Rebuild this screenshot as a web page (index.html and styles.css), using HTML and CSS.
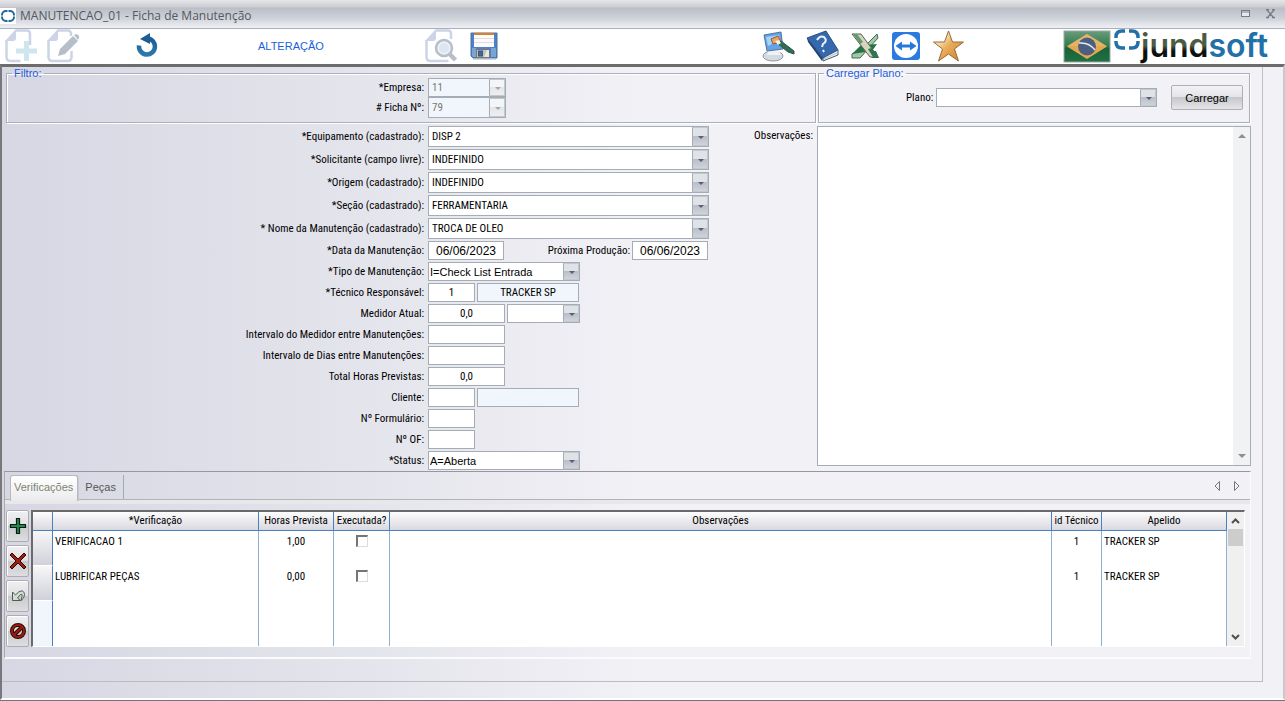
FILE: index.html
```html
<!DOCTYPE html>
<html lang="pt-BR">
<head>
<meta charset="utf-8">
<title>MANUTENCAO_01 - Ficha de Manutenção</title>
<link rel="stylesheet" href="styles.css">
</head>
<body>
<div class="window">
  <header class="titlebar">
    <svg class="app-icon" viewBox="0 0 16 16"><rect width="16" height="16" fill="#fff"/><rect x="2" y="3" width="12" height="10" rx="4" fill="none" stroke="#1f6a9c" stroke-width="2"/><path d="M8 1v4M8 11v4M0 8h4M12 8h4" stroke="#fff"/></svg>
    <h1 class="title">MANUTENCAO_01 - Ficha de Manutenção</h1>
    <div class="window-buttons">
      <button class="plain" aria-label="Restaurar"><svg width="10" height="8" viewBox="0 0 10 8"><rect x=".5" y=".5" width="8" height="6" fill="#e8e9ec" stroke="#777c84"/><path d="M0 2h9" stroke="#777c84" stroke-width="1"/></svg></button>
      <button class="plain" aria-label="Fechar"><svg width="11" height="10" viewBox="0 0 11 10"><path d="M1 .5h3M7 .5h3M1 8.500h3M7 8.500h3M2 1l6 7M9 1L3 8" stroke="#777c84" stroke-width="1.300" fill="none"/></svg></button>
    </div>
  </header>

  <div class="toolbar">
    <div class="tools-edit">
      <button class="plain" aria-label="Novo"><svg width="34" height="34" viewBox="0 0 34 34"><path d="M2.500 11v17q0 4 4 4h10M26 16V5q0-3.500-3-3.500H12" fill="none" stroke="#cdd3e8" stroke-width="2.500"/><path d="M1 12L12 0v9q0 3-3 3z" fill="#cdd3e8"/><path d="M22.500 12v20M12 22h21" stroke="#cfe6ef" stroke-width="5"/></svg></button>
      <button class="plain" aria-label="Editar"><svg width="34" height="34" viewBox="0 0 34 34"><path d="M2.500 11v17q0 4 4 4h15q4 0 4-4v-6M25 7V4q-1-2.500-3-2.500H12" fill="none" stroke="#cdd3e8" stroke-width="2.500"/><path d="M1 12L12 0v9q0 3-3 3z" fill="#cdd3e8"/><path d="M12 27l2-7L27 7l5 5-13 13z" fill="#b6bec9"/><path d="M28 6l2-1q4 1 3 4l-1 2z" fill="#b6bec9"/></svg></button>
    </div>
    <button class="plain refresh" aria-label="Desfazer"><svg width="24" height="28" viewBox="0 0 24 28"><defs><linearGradient id="rf" x2="0" y2="1"><stop stop-color="#1b5d94"/><stop offset="1" stop-color="#2b7aab"/></linearGradient></defs><path d="M11 6.500a8 8 0 1 1-8 7" fill="none" stroke="url(#rf)" stroke-width="4.500"/><path d="M4 7L14 1v11z" fill="#1b5d94"/></svg></button>
    <span class="mode">ALTERAÇÃO</span>
    <div class="tools-save">
      <button class="plain" aria-label="Pesquisar"><svg width="34" height="34" viewBox="0 0 34 34"><path d="M2.500 11v17q0 4 4 4h18M27 10V5q0-3.500-3-3.500H12" fill="none" stroke="#cdd3e8" stroke-width="2.500"/><path d="M1 12L12 0v9q0 3-3 3z" fill="#cdd3e8"/><circle cx="20" cy="19" r="8" fill="#eaf1f8" stroke="#b6bec9" stroke-width="2.500"/><circle cx="20" cy="19" r="5" fill="#dce6f1"/><path d="M25.500 25l6 6" stroke="#b6bec9" stroke-width="4.500"/></svg></button>
      <button class="plain" aria-label="Salvar"><svg width="28" height="28" viewBox="0 0 28 28"><path d="M3 27h23v1H3z" fill="#d5d9de"/><path d="M1 1h26v25H3l-2-2z" fill="#4b82cb" stroke="#4f6f98"/><path d="M2 16h4v9H3l-1-1zM21 16h5v9h-5z" fill="#7aa5d2"/><rect x="4" y="1" width="20" height="2" fill="#dd8027"/><rect x="4" y="3" width="20" height="12" fill="#fbfbfb"/><path d="M4 6.500h20M4 10.500h20" stroke="#dedede"/><rect x="6.500" y="17.500" width="13" height="8" fill="#c4c4bf" stroke="#777"/><rect x="8.500" y="19" width="4" height="5" fill="#3569b4" stroke="#456"/><path d="M14 25l3-7h2v7z" fill="#e8e8e4"/></svg></button>
    </div>
    <div class="tools-right">
      <button class="plain" aria-label="Aparência"><svg width="33" height="32" viewBox="0 0 33 32"><ellipse cx="11" cy="26" rx="10" ry="5" fill="#d3dae2" stroke="#8d99a6"/><path d="M6 20h11l2 5H5z" fill="#eef2f5"/><path d="M2 5l17-3 2 17-16 2z" fill="#62a5e6" stroke="#53739c"/><path d="M4 7l13-2 1 5-12 6z" fill="#a4d4fa"/><path d="M9 9l7-3 3 6-8 2z" fill="#eca55b" stroke="#8c583a"/><path d="M16 14l3-3 13 10v3l-6-2z" fill="#2c6f55" stroke="#385548"/><path d="M13 11l4-1 2 3-3 2z" fill="#eee"/></svg></button>
      <button class="plain" aria-label="Ajuda"><svg width="33" height="32" viewBox="0 0 33 32"><path d="M1 8L20 1l12 19-15 8z" fill="#3569ad" stroke="#2b4f80"/><path d="M1 8l1 4 14 19 1-3z" fill="#214779"/><path d="M17 28l15-8v5l-15 6z" fill="#eef1f4" stroke="#41597b"/><path d="M18 29l13-6" stroke="#b5bdc8"/><path d="M11 10q3-5 7-3 4 4-1 7l-1 3M17 20l1 2" fill="none" stroke="#eaf1fb" stroke-width="2"/></svg></button>
      <button class="plain" aria-label="Excel"><svg width="30" height="28" viewBox="0 0 30 28"><path d="M27 2L15 14 2 22v4h8L28 6z" fill="#a7c5a6" stroke="#3c7150"/><path d="M15 13l12-1-5 7-20 3 9-9z" fill="#237349"/><path d="M18 20l8-1 3 7h-7z" fill="#237349"/><path d="M2 2h9l17 23h-8z" fill="#d7d3bd" stroke="#55644e"/><path d="M18 17l4-1 6 9h-5z" fill="#2f7750"/><path d="M3 2h4l6 8-3 2z" fill="#5e9b72"/></svg></button>
      <button class="plain" aria-label="Acesso remoto"><svg width="30" height="30" viewBox="0 0 30 30"><rect x="1" y="1" width="28" height="28" rx="3" fill="#2a7adf"/><circle cx="15" cy="15" r="12" fill="#fff"/><path d="M4.500 15l6.500-4.500v3h8v-3l6.500 4.500-6.500 4.500v-3h-8v3z" fill="#2678dc"/></svg></button>
      <button class="plain" aria-label="Favoritos"><svg width="33" height="32" viewBox="0 0 33 32"><defs><linearGradient id="st" x2="1" y2="1"><stop offset=".2" stop-color="#fff0cd"/><stop offset=".5" stop-color="#e7ac5b"/><stop offset="1" stop-color="#d07d22"/></linearGradient></defs><path d="M16.500 1l4 11h11l-9 7 4 12-10-7-10 7 4-12-9-7h11z" fill="url(#st)" stroke="#9a6a39"/></svg></button>
    </div>
    <svg class="flag" width="48" height="33" viewBox="0 0 48 33"><defs><linearGradient id="fg" x2="0" y2="1"><stop stop-color="#6a9c7c"/><stop offset=".5" stop-color="#2f7a4b"/><stop offset=".55" stop-color="#186239"/><stop offset="1" stop-color="#1f7143"/></linearGradient></defs><rect x="1" y="1" width="46" height="31" fill="url(#fg)" stroke="#9aa99f"/><path d="M24 4l20 12.500L24 29 4 16.500z" fill="#e2a750"/><path d="M24 4l20 12H4z" fill="#ecc07d" opacity=".5"/><circle cx="24" cy="16.500" r="9" fill="#4b5f83"/><path d="M16 13q10-1 16 7" fill="none" stroke="#e8e9ec" stroke-width="1.500"/></svg>
    <svg class="logo" width="160" height="40" viewBox="0 -2 160 40"><defs><linearGradient id="lg" x2="0" y2="1"><stop offset=".5" stop-color="#4c5b43"/><stop offset=".65" stop-color="#0d100d"/></linearGradient></defs><path d="M12 3H9Q3 3 3 9v1M3 13v1q0 6 6 6h3M16 3h3q6 0 6 6v1M25 13v1q0 6-6 6h-3" fill="none" stroke="#2270a8" stroke-width="3.500"/><text x="28" y="29" class="logo-text"><tspan fill="url(#lg)">jund</tspan><tspan fill="#2270a8">soft</tspan></text></svg>
  </div>

  <main class="client">
    <div class="page">
      <form class="content">
        <div class="filters">
          <fieldset class="group">
            <legend>Filtro:</legend>
            <div class="row"><label for="empresa">*Empresa:</label><span class="combo w-key off"><select id="empresa" disabled><option>11</option></select></span></div>
            <div class="row"><label for="ficha"># Ficha Nº:</label><span class="combo w-key off tall"><select id="ficha" disabled><option>79</option></select></span></div>
          </fieldset>
          <fieldset class="group">
            <legend>Carregar Plano:</legend>
            <div class="plan">
              <label for="plano">Plano:</label><span class="combo w-plan"><select id="plano"><option></option></select></span>
              <button type="button" class="load">Carregar</button>
            </div>
          </fieldset>
        </div>

        <div class="details">
          <div class="fields">
            <div class="row"><label for="equip">*Equipamento (cadastrado):</label><span class="combo tall w-full"><select id="equip"><option>DISP 2</option></select></span></div>
            <div class="row"><label for="solic">*Solicitante (campo livre):</label><span class="combo tall w-full"><select id="solic"><option>INDEFINIDO</option></select></span></div>
            <div class="row"><label for="origem">*Origem (cadastrado):</label><span class="combo tall w-full"><select id="origem"><option>INDEFINIDO</option></select></span></div>
            <div class="row"><label for="secao">*Seção (cadastrado):</label><span class="combo tall w-full"><select id="secao"><option>FERRAMENTARIA</option></select></span></div>
            <div class="row"><label for="nome">* Nome da Manutenção (cadastrado):</label><span class="combo tall w-full"><select id="nome"><option>TROCA DE OLEO</option></select></span></div>
            <div class="row"><label for="data">*Data da Manutenção:</label><input id="data" class="w-date date" value="06/06/2023"><label class="second" for="proxima">Próxima Produção:</label><input id="proxima" class="w-date date" value="06/06/2023"></div>
            <div class="row"><label for="tipo">*Tipo de Manutenção:</label><span class="combo wide-text w-mid"><select id="tipo"><option>I=Check List Entrada</option></select></span></div>
            <div class="row"><label for="tecnico">*Técnico Responsável:</label><input id="tecnico" class="w-id" value="1"><input class="w-name locked" aria-label="Nome do técnico" value="TRACKER SP" readonly></div>
            <div class="row"><label for="medidor">Medidor Atual:</label><input id="medidor" class="w-num" value="0,0"><span class="combo w-unit"><select aria-label="Unidade do medidor"><option></option></select></span></div>
            <div class="row"><label for="intmed">Intervalo do Medidor entre Manutenções:</label><input id="intmed" class="w-num"></div>
            <div class="row"><label for="intdias">Intervalo de Dias entre Manutenções:</label><input id="intdias" class="w-num"></div>
            <div class="row"><label for="horas">Total Horas Previstas:</label><input id="horas" class="w-num" value="0,0"></div>
            <div class="row"><label for="cliente">Cliente:</label><input id="cliente" class="w-id"><input class="w-name locked" aria-label="Nome do cliente" readonly></div>
            <div class="row"><label for="formulario">Nº Formulário:</label><input id="formulario" class="w-id"></div>
            <div class="row"><label for="of">Nº OF:</label><input id="of" class="w-id"></div>
            <div class="row"><label for="status">*Status:</label><span class="combo wide-text w-mid"><select id="status"><option>A=Aberta</option></select></span></div>
          </div>
          <label class="notes-label" for="obs">Observações:</label>
          <div class="notes">
            <textarea id="obs"></textarea>
            <div class="notes-scroll"><i class="tri up"></i><i class="tri down"></i></div>
          </div>
        </div>

        <section class="tabs">
          <div class="tab-strip" role="tablist">
            <button type="button" class="tab active" role="tab" aria-selected="true">Verificações</button>
            <button type="button" class="tab" role="tab" aria-selected="false">Peças</button>
            <div class="tab-arrows">
              <button type="button" class="plain" aria-label="Aba anterior"><svg width="8" height="10" viewBox="0 0 8 10"><path d="M6.500 .5v9L2 5z" fill="none" stroke="#777"/></svg></button>
              <button type="button" class="plain" aria-label="Próxima aba"><svg width="8" height="10" viewBox="0 0 8 10"><path d="M1.500 .5v9L6 5z" fill="none" stroke="#777"/></svg></button>
            </div>
          </div>
          <div class="tab-body">
            <div class="side">
              <button type="button" class="side-btn" aria-label="Adicionar"><svg width="18" height="18" viewBox="0 0 18 18"><path d="M7.500 1.500h3v6h6v3h-6v6h-3v-6h-6v-3h6z" fill="#1e8a50" stroke="#0d1a12" stroke-width="1.200"/></svg></button>
              <button type="button" class="side-btn" aria-label="Excluir"><svg width="18" height="18" viewBox="0 0 18 18"><path d="M1 3l2-2 6 6 6-6 2 2-6 6 6 6-2 2-6-6-6 6-2-2 6-6z" fill="#a01c0c" stroke="#260a06"/></svg></button>
              <button type="button" class="side-btn" aria-label="Reverter"><svg width="18" height="18" viewBox="0 0 18 18"><path d="M3.500 5v8.500h8L8.500 11l3-3.500q2-1 1.500 2l-1 4q3.500-2 3.500-6-.5-4-3.500-3.500-2 0-5.500 4z" fill="#d3dcd5" stroke="#4d5b51"/></svg></button>
              <button type="button" class="side-btn" aria-label="Cancelar"><svg width="18" height="18" viewBox="0 0 18 18"><circle cx="9" cy="9" r="6" fill="none" stroke="#260a06" stroke-width="4"/><path d="M5 13l8-8" stroke="#260a06" stroke-width="4"/><circle cx="9" cy="9" r="6" fill="none" stroke="#9c1c0d" stroke-width="2"/><path d="M5 13l8-8" stroke="#9c1c0d" stroke-width="2"/></svg></button>
            </div>
            <div class="grid">
              <table>
                <colgroup><col class="c-sel"><col class="c-ver"><col class="c-hor"><col class="c-exe"><col><col class="c-id"><col class="c-ape"></colgroup>
                <thead><tr><th></th><th>*Verificação</th><th>Horas Prevista</th><th>Executada?</th><th>Observações</th><th>id Técnico</th><th>Apelido</th></tr></thead>
                <tbody>
                  <tr><td class="sel"></td><td>VERIFICACAO 1</td><td class="c">1,00</td><td class="c"><input type="checkbox" aria-label="Executada, VERIFICACAO 1"></td><td></td><td class="c">1</td><td>TRACKER SP</td></tr>
                  <tr><td class="sel"></td><td>LUBRIFICAR PEÇAS</td><td class="c">0,00</td><td class="c"><input type="checkbox" aria-label="Executada, LUBRIFICAR PEÇAS"></td><td></td><td class="c">1</td><td>TRACKER SP</td></tr>
                  <tr class="rest"><td></td><td></td><td></td><td></td><td></td><td></td><td></td></tr>
                </tbody>
              </table>
              <div class="grid-scroll">
                <svg width="9" height="6" viewBox="0 0 9 6"><path d="M1 5l3.500-3.500L8 5" fill="none" stroke="#505050" stroke-width="2"/></svg>
                <span class="thumb"></span>
                <svg width="9" height="6" viewBox="0 0 9 6"><path d="M1 1l3.500 3.500L8 1" fill="none" stroke="#505050" stroke-width="2"/></svg>
              </div>
            </div>
          </div>
        </section>
      </form>
    </div>
  </main>
</div>
</body>
</html>
```
FILE: styles.css
```css
* { box-sizing: border-box; }

body {
  margin: 0;
  font: 11px/14px "Roboto Condensed", Roboto, sans-serif;
  color: #000;
}

button, input, select, textarea { font: inherit; color: inherit; margin: 0; }

.plain { border: 0; padding: 0; background: none; display: block; }
svg { display: block; }

.window {
  min-height: 100vh;
  display: flex;
  flex-direction: column;
  border-bottom: 1px solid #70757f;
  background: #f2f1f6;
}

/* Title bar */
.titlebar {
  height: 28px;
  display: flex;
  align-items: center;
  gap: 4px;
  padding: 4px 9px 0 0;
  background: linear-gradient(#e6e7ea 0, #cbcbd1 7px, #b9bfc8 8px, #cdd2d9 18px, #eff0f4 28px);
}
.app-icon { width: 16px; height: 16px; }
.title { margin: 0; font: 12px/16px "Open Sans", sans-serif; color: #55585c; }
.window-buttons { margin-left: auto; display: flex; align-items: center; gap: 14px; padding-bottom: 4px; }

/* Toolbar */
.toolbar {
  height: 36px;
  display: flex;
  align-items: center;
  padding: 0 12px 1px 4px;
  border-top: 1px solid #a9b0bb;
  background: #fff;
}
.tools-edit { display: flex; gap: 8px; }
.refresh { margin-left: 56px; }
.mode { margin-left: 98px; width: 166px; padding-bottom: 1px; font: 11px/14px "Liberation Sans", Arial, sans-serif; color: #1d5fd8; }
.tools-save { display: flex; align-items: center; gap: 12px; }
.tools-right { margin-left: auto; display: flex; align-items: center; gap: 11px; }
.flag { margin-left: 98px; }
.logo { margin-left: 2px; }
.logo-text { font: 600 32px Inter, sans-serif; }

/* Client area */
.client {
  flex: 1;
  display: flex;
  padding: 0 20px 16px 0;
  border-top: 3px solid #6c6c6c;
  border-left: 2px solid #77777c;
  border-right: 2px solid #c9c9cc;
  border-bottom: 2px solid #fff;
  background: linear-gradient(90deg, #d7d7e4 0, #e4e4ec 360px, #f2f1f6 640px);
}
.page {
  flex: 1;
  padding: 1px 11px 0 2px;
  border-right: 1px solid #c0c0c3;
  border-bottom: 1px solid #bcbcbf;
}

.filters { display: grid; grid-template-columns: 813fr 434fr; }
.group {
  min-width: 0;
  margin: 0 1px;
  padding: 0 0 4px;
  border: 1px solid #a9b0b9;
  box-shadow: 1px 1px 0 #fff, inset 1px 1px 0 #fff;
}
.group:first-child { margin-left: 2px; }
legend { margin-left: 5px; padding: 0 2px; font: 11px/10px "Liberation Sans", Arial, sans-serif; color: #1d5fd8; }

.row { display: flex; align-items: center; gap: 2px; }
.row > label:first-child { width: 420px; padding: 1px 2px 0 0; text-align: right; }
.group .row { margin-left: -1px; }

.plan { display: flex; align-items: center; padding: 7px 6px 1px 87px; }
.plan label { margin-right: 3px; }
.load {
  width: 72px;
  height: 25px;
  margin-left: 14px;
  border: 1px solid #aeb0b4;
  border-radius: 2px;
  font: 11px/14px "Liberation Sans", Arial, sans-serif;
  background: linear-gradient(#f3f3f5, #e4e4e6 48%, #c6c7ca 50%, #e6e6e8);
}

/* Fields */
input, .combo, textarea { border: 1px solid #a4acb5; background: #fff; }
input { height: 19px; padding: 0; text-align: center; border-radius: 0; }
.locked, .off { background: #f1f6fc; }
.date, .wide-text { font: 12px/14px "Liberation Sans", Arial, sans-serif; }
.wide-text { font-size: 11px; }

.combo { position: relative; display: flex; height: 19px; }
.combo.tall { height: 21px; }
.combo select {
  flex: 1;
  min-width: 0;
  padding: 0 16px 0 3px;
  border: 0;
  border-radius: 0;
  appearance: none;
  background: none;
}
.combo.wide-text select { padding-left: 1px; }
.combo::before {
  content: "";
  position: absolute;
  top: 0;
  right: 0;
  bottom: 0;
  width: 14px;
  border: 1px solid #c3c8cf;
  border-left-color: #a4acb5;
  background: linear-gradient(#dfe2e7 48%, #b9bec9 50%, #cfd3da);
  pointer-events: none;
}
.combo::after {
  content: "";
  position: absolute;
  top: 50%;
  right: 4px;
  margin-top: -1px;
  border: 3px solid transparent;
  border-top-color: #5c5f70;
  border-bottom: 0;
  pointer-events: none;
}
.off select { color: #77786c; opacity: 1; }
.off::before { background: linear-gradient(#f4f5f7 48%, #e4e6e9 50%, #eeeff1); }
.off::after { border-top-color: #a5a8ac; }

.w-key { width: 78px; }
.w-plan { flex: 1; }
.w-full { width: 281px; }
.w-date { width: 76px; }
.w-mid { width: 152px; }
.w-id { width: 47px; }
.w-name { width: 102px; }
.w-num { width: 77px; }
.w-unit { width: 73px; }
.second { width: 124px; text-align: right; }

.details {
  display: grid;
  grid-template-columns: 709fr 104fr 434fr;
  padding-top: 3px;
}
.fields { display: flex; flex-direction: column; gap: 2px; padding-left: 2px; }
.notes-label { padding: 3px 4px 0 0; text-align: right; }
.notes { display: flex; margin-bottom: 4px; border: 1px solid #a4acb5; background: #fff; }
.notes textarea { flex: 1; min-width: 0; border: 0; resize: none; background: none; }
.notes-scroll {
  width: 17px;
  display: flex;
  flex-direction: column;
  justify-content: space-between;
  align-items: center;
  padding: 7px 0;
  background: #f1f2f3;
}
.tri { border: 4px solid transparent; }
.tri.up { border-bottom-color: #8d8f90; border-top: 0; }
.tri.down { border-top-color: #8d8f90; border-bottom: 0; }

/* Tabs */
.tabs {
  margin-top: 1px;
  padding-bottom: 10px;
  border-top: 1px solid #97979d;
  border-left: 1px solid #a9a9b0;
  border-bottom: 2px solid #fbfbfd;
  border-right: 1px solid #fbfbfd;
}
.tab-strip { display: flex; height: 28px; padding: 3px 0 0 5px; border-bottom: 1px solid #b3b3b5; }
.tab {
  padding: 0 7px 0 6px;
  border: 0;
  border-right: 1px solid #a8a8b0;
  font: 11px/14px "Liberation Sans", Arial, sans-serif;
  color: #55574f;
  background: none;
}
.tab.active {
  height: 26px;
  margin-right: 1px;
  padding: 0 4px 3px 3px;
  border: 1px solid #b9b9bd;
  border-bottom: 0;
  border-radius: 3px 3px 0 0;
  color: #7e8371;
  background: linear-gradient(#fff, #ebebee);
  box-shadow: 1px 0 0 #c8c8cf;
}
.tab-arrows { margin-left: auto; display: flex; align-items: center; gap: 12px; padding: 0 9px 2px 0; }
.tab-body { display: flex; gap: 2px; padding: 6px 5px 0 1px; border-top: 4px solid #e7e7ec; }
.side { display: flex; flex-direction: column; gap: 3px; }
.side-btn {
  width: 23px;
  height: 32px;
  padding: 0;
  display: grid;
  place-items: center;
  border: 1px solid #acacb2;
  border-radius: 2px;
  background: linear-gradient(#f0f0f2, #e0e0e3 48%, #c8c9cc 50%, #dedee1);
  box-shadow: inset 1px 1px 0 #fff;
}

.grid {
  flex: 1;
  display: flex;
  border: 1px solid #fff;
  border-top: 2px solid #6a6a6a;
  border-left: 2px solid #6a6a6a;
  background: #fff;
}
table { flex: 1; border-collapse: separate; border-spacing: 0; table-layout: fixed; width: 100%; }
.c-sel { width: 20px; }
.c-ver { width: 206px; }
.c-hor { width: 75px; }
.c-exe { width: 56px; }
.c-id { width: 50px; }
.c-ape { width: 125px; }
th {
  height: 19px;
  padding: 0;
  font-weight: normal;
  white-space: nowrap;
  border-right: 1px solid #4a7fc1;
  border-bottom: 1px solid #4a7fc1;
  background: linear-gradient(#fdfdfe, #d8d8df);
}
td { height: 35px; padding: 4px 2px 0; vertical-align: top; border-right: 1px solid #8fb0cf; }
td:first-child { border-right-color: #4a7fc1; background: #f1f6fd; }
td.sel { border-bottom: 1px solid #fff; background: linear-gradient(#f7f7f9, #d0d1d9); }
td.c { text-align: center; }
.rest td { height: auto; }
td input[type="checkbox"] {
  appearance: none;
  display: block;
  width: 12px;
  height: 12px;
  margin: 0 auto;
  border: 1px solid #dcdcdc;
  border-top: 2px solid #757575;
  border-left: 2px solid #757575;
}
.grid-scroll {
  width: 17px;
  display: flex;
  flex-direction: column;
  align-items: center;
  padding: 6px 0;
  background: #f0f0f0;
}
.thumb { width: 15px; height: 17px; margin: 5px 0 auto; background: #cdcdcd; }
```
